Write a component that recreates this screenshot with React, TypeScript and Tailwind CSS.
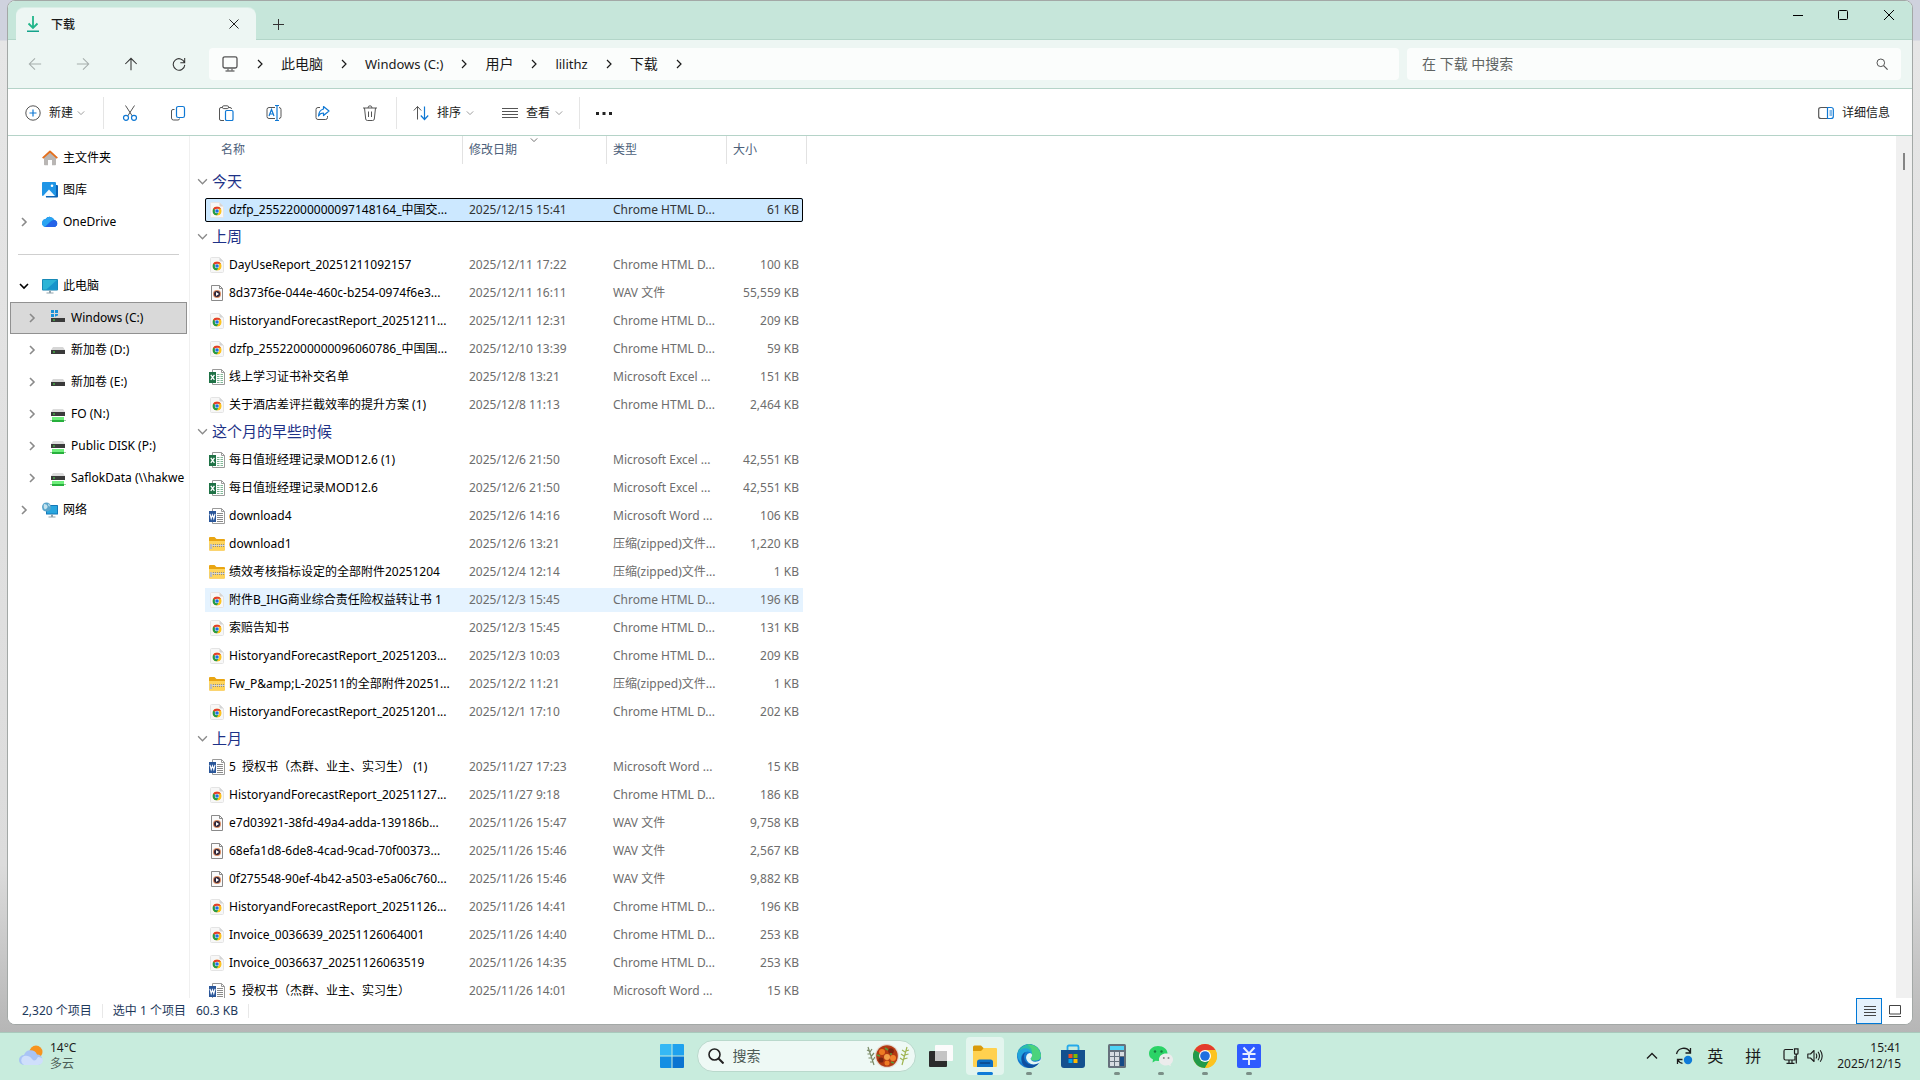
import React from "react";

type Kind = "chrome" | "wav" | "excel" | "word" | "zip";
type FileRow = { kind: Kind; name: string; date: string; type: string; size: string; state?: "selected" | "hover" };
type Group = { title: string; rows: FileRow[] };

const HTML = "Chrome HTML D...";
const XLS = "Microsoft Excel ...";
const DOC = "Microsoft Word ...";
const ZIP = "压缩(zipped)文件...";
const WAV = "WAV 文件";

const row = (kind: Kind, name: string, date: string, type: string, size: string, state?: FileRow["state"]): FileRow => ({
  kind,
  name,
  date,
  type,
  size,
  state,
});

const groups: Group[] = [
  {
    title: "今天",
    rows: [row("chrome", "dzfp_25522000000097148164_中国交...", "2025/12/15 15:41", HTML, "61 KB", "selected")],
  },
  {
    title: "上周",
    rows: [
      row("chrome", "DayUseReport_20251211092157", "2025/12/11 17:22", HTML, "100 KB"),
      row("wav", "8d373f6e-044e-460c-b254-0974f6e3...", "2025/12/11 16:11", WAV, "55,559 KB"),
      row("chrome", "HistoryandForecastReport_20251211...", "2025/12/11 12:31", HTML, "209 KB"),
      row("chrome", "dzfp_25522000000096060786_中国国...", "2025/12/10 13:39", HTML, "59 KB"),
      row("excel", "线上学习证书补交名单", "2025/12/8 13:21", XLS, "151 KB"),
      row("chrome", "关于酒店差评拦截效率的提升方案 (1)", "2025/12/8 11:13", HTML, "2,464 KB"),
    ],
  },
  {
    title: "这个月的早些时候",
    rows: [
      row("excel", "每日值班经理记录MOD12.6 (1)", "2025/12/6 21:50", XLS, "42,551 KB"),
      row("excel", "每日值班经理记录MOD12.6", "2025/12/6 21:50", XLS, "42,551 KB"),
      row("word", "download4", "2025/12/6 14:16", DOC, "106 KB"),
      row("zip", "download1", "2025/12/6 13:21", ZIP, "1,220 KB"),
      row("zip", "绩效考核指标设定的全部附件20251204", "2025/12/4 12:14", ZIP, "1 KB"),
      row("chrome", "附件B_IHG商业综合责任险权益转让书 1", "2025/12/3 15:45", HTML, "196 KB", "hover"),
      row("chrome", "索赔告知书", "2025/12/3 15:45", HTML, "131 KB"),
      row("chrome", "HistoryandForecastReport_20251203...", "2025/12/3 10:03", HTML, "209 KB"),
      row("zip", "Fw_P&amp;L-202511的全部附件20251...", "2025/12/2 11:21", ZIP, "1 KB"),
      row("chrome", "HistoryandForecastReport_20251201...", "2025/12/1 17:10", HTML, "202 KB"),
    ],
  },
  {
    title: "上月",
    rows: [
      row("word", "5\u00a0 授权书（杰群、业主、实习生） (1)", "2025/11/27 17:23", DOC, "15 KB"),
      row("chrome", "HistoryandForecastReport_20251127...", "2025/11/27 9:18", HTML, "186 KB"),
      row("wav", "e7d03921-38fd-49a4-adda-139186b...", "2025/11/26 15:47", WAV, "9,758 KB"),
      row("wav", "68efa1d8-6de8-4cad-9cad-70f00373...", "2025/11/26 15:46", WAV, "2,567 KB"),
      row("wav", "0f275548-90ef-4b42-a503-e5a06c760...", "2025/11/26 15:46", WAV, "9,882 KB"),
      row("chrome", "HistoryandForecastReport_20251126...", "2025/11/26 14:41", HTML, "196 KB"),
      row("chrome", "Invoice_0036639_20251126064001", "2025/11/26 14:40", HTML, "253 KB"),
      row("chrome", "Invoice_0036637_20251126063519", "2025/11/26 14:35", HTML, "253 KB"),
      row("word", "5\u00a0 授权书（杰群、业主、实习生）", "2025/11/26 14:01", DOC, "15 KB"),
    ],
  },
];

function Svg({ children, className = "size-4", box = "0 0 16 16" }: { children: React.ReactNode; className?: string; box?: string }) {
  return (
    <svg viewBox={box} fill="none" className={`shrink-0 ${className}`} aria-hidden="true">
      {children}
    </svg>
  );
}

const Chevron = ({ dir, className, weight = 1.2 }: { dir: "right" | "down"; className: string; weight?: number }) => (
  <Svg box="0 0 10 10" className={className}>
    <path d={dir === "right" ? "M3 1l4 4-4 4" : "M1 3l4 4 4-4"} stroke="currentColor" strokeWidth={weight} />
  </Svg>
);

function ChromeLogo() {
  return (
    <>
      <circle cx="12" cy="12" r="12" fill="#fbc116" />
      <path d="M12 12L1.6 6A12 12 0 0 1 22.4 6Z" fill="#e33b2e" />
      <path d="M12 12L1.6 6A12 12 0 0 0 12 24L17.2 15Z" fill="#229a49" />
      <path d="M12 6h10.4A12 12 0 0 1 12 24l5.2-9z" fill="#fcc31e" />
      <circle cx="12" cy="12" r="6" fill="#fff" />
      <circle cx="12" cy="12" r="4.8" fill="#1d6fe0" />
    </>
  );
}

function FileIcon({ kind }: { kind: Kind }) {
  if (kind === "chrome")
    return (
      <Svg>
        <path d="M1.5 1.5q0-1 1-1h8l4 4v10q0 1-1 1h-11q-1 0-1-1z" fill="#f7f7f7" stroke="#e4e4e4" />
        <path d="M10.5.5v3q0 1 1 1h3z" fill="#d4d4d4" />
        <svg x="3.500" y="4.500" width="9" height="9" viewBox="0 0 24 24">
          <ChromeLogo />
        </svg>
      </Svg>
    );
  if (kind === "wav")
    return (
      <Svg>
        <path d="M2.5.5h8l3 3v12h-11z" fill="#fafafa" stroke="#8a8a8a" />
        <path d="M10.5.5v3h3" stroke="#8a8a8a" />
        <circle cx="8" cy="9" r="4" fill="#d98b62" />
        <circle cx="8" cy="9" r="3" fill="#2b2338" />
        <path d="M7 7l3 2-3 2z" fill="#fff" />
      </Svg>
    );
  if (kind === "zip")
    return (
      <Svg>
        <path d="M0 2q0-1 1-1h4.5l2 2H15q1 0 1 1v9.500q0 1-1 1H1q-1 0-1-1z" fill="#e9a512" />
        <path d="M0 5h16v8.500q0 1-1 1H1q-1 0-1-1z" fill="#ffd55c" />
        <path d="M2 8.500h14M2 10.500h14" stroke="#8c8c8c" strokeDasharray="1 1" />
        <path d="M2 9.500h14" stroke="#d8d8d8" />
        <path d="M.8 8h2.400v5H.8z" fill="#b9bdc4" />
      </Svg>
    );
  const excel = kind === "excel";
  const tone = excel ? "#1f7246" : "#2a5699";
  return (
    <Svg>
      <path d="M3.500.5h9l3 3v12h-12z" fill="#fff" stroke="#9a9a9a" />
      <path d="M12.500.5v3h3" stroke="#9a9a9a" />
      {excel ? (
        <path d="M8 5.500h6M8 7.500h6M8 9.500h6M8 11.500h6M8 13.500h6" stroke="#7fb796" strokeDasharray="2.500 1" />
      ) : (
        <path d="M8 5.500h6M8 7.500h6M8 9.500h6M8 11.500h6M8 13.500h6" stroke="#8a8a8a" />
      )}
      <path d="M0 3h7v11H0z" fill={tone} />
      {excel ? (
        <path d="M1.800 5.800l3.600 5M5.400 5.800l-3.600 5" stroke="#fff" strokeWidth="1.300" />
      ) : (
        <path d="M1 5.800l1.200 4.700 1.300-3.700 1.300 3.700L6 5.800" stroke="#fff" strokeWidth="1.100" />
      )}
    </Svg>
  );
}

/* ---------- sidebar ---------- */

const HomeIcon = () => (
  <Svg>
    <path d="M2 7.500L8 2l6 5.500V14.500q0 .8-.8.8H10V10H6v5.300H2.800q-.8 0-.8-.8z" fill="#b9b6b4" />
    <path d="M.7 8.200L8 1.500l7.300 6.700" stroke="#e46f1d" strokeWidth="1.800" strokeLinejoin="round" />
  </Svg>
);
const GalleryIcon = () => (
  <Svg>
    <path d="M3 3h12q1 0 1 1v10.500q0 1-1 1H4z" fill="#0b62b4" />
    <rect width="14" height="14" rx="1" fill="#1f95e6" />
    <path d="M1 14l6-6.500 6 6.500z" fill="#f3faff" />
    <circle cx="10" cy="3.800" r="1.300" fill="#fff" />
  </Svg>
);
const CloudIcon = () => (
  <Svg>
    <path d="M4 13a4 4 0 0 1-.4-7.900A5 5 0 0 1 12.400 6 3.600 3.600 0 0 1 12.500 13z" fill="#1378dc" />
    <path d="M3.600 5.100A5 5 0 0 1 12.400 6Q9 6 7 9L3 13a4 4 0 0 1 .6-7.900z" fill="#2aa4f2" />
    <path d="M3 13l5-4.500q2-2.500 4.400-2.500a3.600 3.600 0 0 1 .1 7z" fill="#2563e8" />
  </Svg>
);
const PcIcon = () => (
  <Svg>
    <rect x="0" y="1" width="16" height="11.500" rx="1" fill="#137fae" />
    <rect x=".8" y="1.800" width="14.400" height="9.900" fill="#2cb4d6" />
    <path d="M15.200 1.800v9.900H4z" fill="#1794cb" />
    <path d="M7 12.500h2v2H7zM4.500 14.500h7v1h-7z" fill="#8fa3ad" />
  </Svg>
);
const Drive = ({ net = false, win = false }: { net?: boolean; win?: boolean }) => (
  <Svg>
    {win && <path d="M1 0h3v3H1zM5 0h3v3H5zM1 4h3v3H1zM5 4h3v3H5z" fill="#1991d8" />}
    {net ? (
      <>
        <path d="M3 3h10l2 3H1z" fill="#dcdcdc" />
        <rect x="1" y="6" width="14" height="4" fill="#3a3a3a" />
        <path d="M3 8h2" stroke="#4be04b" />
        <path d="M0 14.500h16" stroke="#9fc9a5" />
        <rect x="2" y="11" width="12" height="3" fill="#6fee7c" />
        <rect x="2" y="14" width="12" height="2" fill="#27b03c" />
      </>
    ) : (
      <>
        <path d={win ? "M9 5h4l2 3H2z" : "M3 5h10l2 3H1z"} fill="#d6d6d6" />
        <rect x="1" y="8" width="14" height="4" fill="#3a3a3a" />
        <path d="M3 10h2" stroke="#4be04b" />
      </>
    )}
  </Svg>
);
const NetworkIcon = () => (
  <Svg>
    <rect x="4" y="3" width="12" height="9.500" rx=".5" fill="#1478b8" />
    <rect x="5" y="4" width="10" height="7.500" fill="#29a6de" />
    <path d="M9 12.500h2v2H9zM6.500 14.500h7v1h-7z" fill="#8fa3ad" />
    <circle cx="4.500" cy="5" r="4.500" fill="#5aa5cb" />
    <path d="M2 2q3 0 3.500 2T3 7.500Q1 6 2 2zM6 1.500q2 1 2 3L6.500 4z" fill="#c5e3ee" />
  </Svg>
);

type NavNode = { label: string; icon: React.ReactNode; arrow?: "right" | "down"; child?: boolean; active?: boolean };
const quick: NavNode[] = [
  { label: "主文件夹", icon: <HomeIcon /> },
  { label: "图库", icon: <GalleryIcon /> },
  { label: "OneDrive", icon: <CloudIcon />, arrow: "right" },
];
const tree: NavNode[] = [
  { label: "此电脑", icon: <PcIcon />, arrow: "down" },
  { label: "Windows (C:)", icon: <Drive win />, arrow: "right", child: true, active: true },
  { label: "新加卷 (D:)", icon: <Drive />, arrow: "right", child: true },
  { label: "新加卷 (E:)", icon: <Drive />, arrow: "right", child: true },
  { label: "FO (N:)", icon: <Drive net />, arrow: "right", child: true },
  { label: "Public DISK (P:)", icon: <Drive net />, arrow: "right", child: true },
  { label: "SaflokData (\\\\hakwe", icon: <Drive net />, arrow: "right", child: true },
  { label: "网络", icon: <NetworkIcon />, arrow: "right" },
];

function NavItem({ node }: { node: NavNode }) {
  return (
    <li>
      <a
        href="#"
        className={`flex h-8 items-center overflow-hidden whitespace-nowrap border ${node.child ? "pl-4" : "pl-2"} ${
          node.active ? "border-[#919191] bg-[#d9d9d9]" : "border-transparent"
        }`}
      >
        <span className="flex w-[23px] shrink-0">
          {node.arrow && (
            <Chevron
              dir={node.arrow}
              weight={1.6}
              className={`size-[10px] ${node.arrow === "down" ? "text-black" : "text-[#8a8a8a]"}`}
            />
          )}
        </span>
        {node.icon}
        <span className="ml-[5px]">{node.label}</span>
      </a>
    </li>
  );
}

function Sidebar() {
  return (
    <nav aria-label="导航窗格" className="w-[182px] shrink-0 border-r border-[#f0f0f0] px-[2px] pt-[6px]">
      <ul>
        {quick.map((n) => (
          <NavItem key={n.label} node={n} />
        ))}
      </ul>
      <div className="flex h-8 items-center px-2">
        <hr className="w-full border-[#cfcfcf]" />
      </div>
      <ul>
        {tree.map((n) => (
          <NavItem key={n.label} node={n} />
        ))}
      </ul>
    </nav>
  );
}

/* ---------- file list ---------- */

const rowTone = {
  selected: "bg-[#cce8ff] text-[#333] outline outline-1 -outline-offset-1 outline-black rounded-[2px]",
  hover: "bg-[#e5f3ff] text-[#6d6d6d]",
  plain: "text-[#6d6d6d]",
};

function FileList() {
  return (
    <main className="min-w-0 flex-1 overflow-hidden pl-[15px]">
      <table className="-mt-1 w-[598px] table-fixed border-separate border-spacing-x-0 border-spacing-y-[4px] whitespace-nowrap">
        <colgroup>
          <col className="w-[258px]" />
          <col className="w-[144px]" />
          <col className="w-[120px]" />
          <col className="w-[76px]" />
        </colgroup>
        <thead>
          <tr className="h-[31px] text-left align-top text-[#4c607a]">
            <th className="p-0 font-normal">
              <div className="flex h-7 items-center border-r border-[#e2e2e2] pl-4">名称</div>
            </th>
            <th className="p-0 font-normal">
              <div className="relative flex h-7 items-center border-r border-[#e2e2e2] pl-1.5">
                修改日期
                <Chevron dir="down" className="absolute top-0 left-[67px] size-2 text-[#6d6d6d]" />
              </div>
            </th>
            <th className="p-0 font-normal">
              <div className="flex h-7 items-center border-r border-[#e2e2e2] pl-1.5">类型</div>
            </th>
            <th className="p-0 font-normal">
              <div className="-mr-1 flex h-7 items-center border-r border-[#e2e2e2] pl-1.5">大小</div>
            </th>
          </tr>
        </thead>
        {groups.map((g) => (
          <tbody key={g.title}>
            <tr className="h-[23px]">
              <th colSpan={4} className="text-left align-top text-[15px] leading-[21px] font-normal text-[#1e3287]">
                <button type="button" className="-ml-2 flex h-[21px] items-center gap-1">
                  <Chevron dir="down" className="size-[11px] text-[#8a8a8a]" />
                  {g.title}
                </button>
              </th>
            </tr>
            {g.rows.map((r) => (
              <tr key={r.name} className={`h-6 ${rowTone[r.state ?? "plain"]}`}>
                <td className="pl-1 text-black">
                  <span className="flex items-center gap-1">
                    <FileIcon kind={r.kind} />
                    <span>{r.name}</span>
                  </span>
                </td>
                <td className="pl-1.5">{r.date}</td>
                <td className="pl-1.5">{r.type}</td>
                <td className="pr-1 text-right">{r.size}</td>
              </tr>
            ))}
          </tbody>
        ))}
      </table>
    </main>
  );
}

/* ---------- window chrome ---------- */

function TitleBar() {
  return (
    <header className="flex h-[39px] items-start bg-[#c6e6da] pl-2 shadow-[inset_0_-1px_0_#b3d6c9]">
      <div className="mt-[7px] flex h-8 w-60 items-center rounded-t-lg bg-[#edf6f3] pr-3 pl-[11px] shadow-[0_-1px_0_#d9eee6]">
        <Svg className="h-4 w-3" box="0 0 12 16">
          <path d="M6 0v12M1.500 7.500L6 12 10.500 7.500" stroke="#21b58a" strokeWidth="1.800" />
          <path d="M0 15.200h12" stroke="#14a38b" strokeWidth="1.600" />
        </Svg>
        <span className="mt-[2px] ml-3 flex-1 font-medium text-[#1a1a1a]">下载</span>
        <button type="button" aria-label="关闭标签页" className="flex size-5 items-center justify-center">
          <Svg box="0 0 10 10" className="size-[10px]">
            <path d="M.5.5l9 9M9.500.5l-9 9" stroke="#222" />
          </Svg>
        </button>
      </div>
      <button type="button" aria-label="新建标签页" className="mt-[7px] ml-3 flex h-8 w-5 items-center justify-center">
        <Svg box="0 0 11 11" className="size-[11px]">
          <path d="M5.500 0v11M0 5.500h11" stroke="#333" />
        </Svg>
      </button>
      <div className="ml-auto flex h-7 items-center">
        <button type="button" aria-label="最小化" className="flex h-7 w-11 items-center justify-center">
          <Svg box="0 0 10 10" className="size-[10px]">
            <path d="M0 5.500h10" stroke="#000" />
          </Svg>
        </button>
        <button type="button" aria-label="最大化" className="flex h-7 w-[46px] items-center justify-center">
          <Svg box="0 0 10 10" className="size-[10px]">
            <rect x=".5" y=".5" width="9" height="9" rx="1" stroke="#000" />
          </Svg>
        </button>
        <button type="button" aria-label="关闭" className="flex h-7 w-[46px] items-center justify-center">
          <Svg box="0 0 10 10" className="size-[10px]">
            <path d="M0 0l10 10M10 0L0 10" stroke="#000" />
          </Svg>
        </button>
      </div>
    </header>
  );
}

function NavButton({ label, d, muted = false }: { label: string; d: string; muted?: boolean }) {
  return (
    <button type="button" aria-label={label} className={`flex w-12 items-center justify-center ${muted ? "text-[#a5adab]" : "text-[#333]"}`}>
      <Svg className="size-[14px]">
        <path d={d} stroke="currentColor" strokeWidth="1.200" />
      </Svg>
    </button>
  );
}

const crumbs = [
  { label: "此电脑", size: "text-[14px]" },
  { label: "Windows (C:)", size: "text-[13px]" },
  { label: "用户", size: "text-[14px]" },
  { label: "lilithz", size: "text-[13px]" },
  { label: "下载", size: "text-[14px]" },
];

function AddressRow() {
  return (
    <div className="flex h-[49px] items-center border-b border-[#b5d3c8] bg-[#edf6f3] pr-[11px] pl-[3px] text-sm text-[#1a1a1a]">
      <NavButton label="后退" muted d="M15 8H1.500M8 1.500L1.500 8 8 14.500" />
      <NavButton label="前进" muted d="M1 8h13.500M8 1.500L14.500 8 8 14.500" />
      <NavButton label="上移" d="M8 15V1.500M1.500 8L8 1.500 14.500 8" />
      <NavButton label="刷新" d="M14.300 6.500A6.600 6.600 0 1 0 14.600 9M14.500 1v5.500H9.500" />
      <div className="ml-[6px] flex h-8 min-w-0 flex-1 items-center rounded bg-[#fbfdfc] pl-[13px]">
        <Svg className="size-4">
          <rect x="1" y=".8" width="14" height="11.200" rx="1.800" stroke="#555" strokeWidth="1.300" />
          <path d="M6 12v2.500M10 12v2.500M3.500 15h9" stroke="#777" strokeWidth="1.400" />
        </Svg>
        <Chevron dir="right" className="ml-[17px] size-[10px]" />
        {crumbs.map((c) => (
          <span key={c.label} className="ml-4 flex items-center gap-4 whitespace-nowrap">
            <a href="#" className={c.size}>
              {c.label}
            </a>
            <Chevron dir="right" className="size-[10px]" />
          </span>
        ))}
      </div>
      <label className="ml-2 flex h-8 w-[494px] items-center rounded bg-[#fbfdfc] pr-[13px] pl-[15px]">
        <input
          aria-label="搜索"
          placeholder="在 下载 中搜索"
          className="min-w-0 flex-1 bg-transparent outline-none placeholder:text-[#5f6463]"
        />
        <Svg box="0 0 12 12" className="size-3">
          <circle cx="4.800" cy="4.800" r="3.800" stroke="#555" />
          <path d="M7.600 7.600l4 4" stroke="#555" strokeWidth="1.200" />
        </Svg>
      </label>
    </div>
  );
}

const B = "#0f78d4";
const G = "#555";

const iconButtons: { label: string; icon: React.ReactNode }[] = [
  {
    label: "剪切",
    icon: (
      <>
        <path d="M3.500.5l6.800 10.500M12.500.5L5.700 11" stroke={G} />
        <circle cx="4" cy="12.800" r="2.500" stroke={B} strokeWidth="1.200" />
        <circle cx="12" cy="12.800" r="2.500" stroke={B} strokeWidth="1.200" />
      </>
    ),
  },
  {
    label: "复制",
    icon: (
      <>
        <path d="M4.500 4.500H3q-1.500 0-1.500 1.500v7q0 2 2 2H8q1.500 0 1.500-1.500" stroke={G} />
        <rect x="6.500" y="1.500" width="8" height="11" rx="1.800" stroke={B} strokeWidth="1.200" />
      </>
    ),
  },
  {
    label: "粘贴",
    icon: (
      <>
        <path d="M4.500 2.500H3Q1.500 2.500 1.500 4v10q0 1.500 1.500 1.500h3M10.500 2.500H12q1.500 0 1.500 1.500" stroke={G} />
        <rect x="4.500" y=".8" width="6" height="2.800" rx="1.200" stroke={G} />
        <rect x="7.500" y="5.500" width="7.500" height="10" rx="1.300" stroke={B} strokeWidth="1.200" />
      </>
    ),
  },
  {
    label: "重命名",
    icon: (
      <>
        <path d="M9 2.500H3Q1 2.500 1 4.500v7q0 2 2 2h6M13 2.500q2 0 2 2v7q0 2-2 2" stroke={G} />
        <path d="M9 .5h4M9 15.500h4M11 .5v15" stroke={B} strokeWidth="1.200" />
        <path d="M3 11l2.500-6.500L8 11M3.800 9h3.400" stroke={B} strokeWidth="1.200" />
      </>
    ),
  },
  {
    label: "共享",
    icon: (
      <>
        <path d="M6 2.500H4Q2 2.500 2 4.500v8q0 2 2 2h7.500q2 0 2-2V11" stroke={G} />
        <path d="M9.500 1.500l5.500 4.500-5.500 4.500V8Q6 8 4.500 11 5 5 9.500 4z" stroke={B} strokeWidth="1.200" strokeLinejoin="round" />
      </>
    ),
  },
  {
    label: "删除",
    icon: (
      <path d="M1 3h14M2.500 3l1.200 11q.2 1.500 1.700 1.500h5.200q1.500 0 1.700-1.500L13.500 3M6 3q0-2.200 2-2.200T10 3M6.500 6.500v5.500M9.500 6.500v5.500" stroke={G} />
    ),
  },
];

const Sep = ({ className }: { className: string }) => <span className={`h-8 w-px bg-[#e5e5e5] ${className}`} />;
const SmallDown = () => <Chevron dir="down" className="size-2 text-[#999]" />;

function Toolbar() {
  return (
    <div role="toolbar" className="flex h-[47px] items-center border-b border-[#b5d3c8] bg-white pt-[2px] pr-[22px] pl-[17px] text-[#1a1a1a]">
      <button type="button" className="flex items-center gap-2">
        <Svg>
          <circle cx="8" cy="8" r="7.200" stroke={G} />
          <path d="M8 4.500v7M4.500 8h7" stroke={B} strokeWidth="1.200" />
        </Svg>
        新建
        <span className="-ml-1">
          <SmallDown />
        </span>
      </button>
      <Sep className="mx-[18px]" />
      <div className="flex gap-8">
        {iconButtons.map((b) => (
          <button key={b.label} type="button" aria-label={b.label}>
            <Svg>{b.icon}</Svg>
          </button>
        ))}
      </div>
      <Sep className="mr-4 ml-[18px]" />
      <button type="button" className="flex items-center gap-2">
        <Svg>
          <path d="M4.500 14.500v-13M.8 5.500l3.700-4 3.700 4" stroke={G} />
          <path d="M11.500 1.500v13M7.800 10.500l3.700 4 3.700-4" stroke={B} strokeWidth="1.200" />
        </Svg>
        排序
        <span className="-ml-[3px]">
          <SmallDown />
        </span>
      </button>
      <button type="button" className="ml-7 flex items-center gap-2">
        <Svg>
          <path d="M0 3.500h16M0 6.500h16M0 9.500h16M0 12.500h16" stroke={G} />
        </Svg>
        查看
        <span className="-ml-[3px]">
          <SmallDown />
        </span>
      </button>
      <Sep className="mx-4" />
      <button type="button" aria-label="更多">
        <Svg>
          <path d="M0 7h3v3H0zM6.500 7h3v3h-3zM13 7h3v3h-3z" fill="#222" />
        </Svg>
      </button>
      <button type="button" className="ml-auto flex items-center gap-2">
        <Svg>
          <path d="M9 2.500H3q-2.300 0-2.300 2v7q0 2 2.300 2h6" stroke={G} strokeWidth="1.200" />
          <path d="M9.500 2.500h3.500q2.300 0 2.300 2v7q0 2-2.300 2H9.500zM11.500 6h2.500M11.500 8h2.500M11.500 10h2.500" stroke={B} strokeWidth="1.200" />
        </Svg>
        详细信息
      </button>
    </div>
  );
}

function StatusBar() {
  return (
    <footer className="flex h-[26px] items-center bg-white pl-[14px] text-[#1e395b]">
      <span>2,320 个项目</span>
      <span className="mx-[10px] h-[14px] w-px bg-[#e8e8e8]" />
      <span>选中 1 个项目</span>
      <span className="ml-[10px]">60.3 KB</span>
      <span className="mx-[10px] h-[14px] w-px bg-[#e8e8e8]" />
      <button
        type="button"
        aria-label="详细信息视图"
        className="ml-auto flex h-full w-[26px] items-center justify-center border border-[#0078d7] bg-[#e5f1fb]"
      >
        <Svg box="0 0 12 12" className="ml-[2px] size-3">
          <path d="M0 1.500h12M0 4.500h12M0 7.500h12M0 10.500h12" stroke="#444" />
        </Svg>
      </button>
      <button type="button" aria-label="大图标视图" className="mr-[11px] ml-[7px]">
        <Svg box="0 0 12 12" className="size-3">
          <path d="M.5.500h11v8.500H.5zM0 11.500h12" stroke="#444" />
        </Svg>
      </button>
    </footer>
  );
}

/* ---------- taskbar ---------- */

const apps: { label: string; icon: React.ReactNode; state?: "active" | "running" }[] = [
  {
    label: "任务视图",
    icon: (
      <>
        <rect x="0" y="7" width="18" height="16" rx="1" fill="#2b2b2b" />
        <rect x="6" y="1" width="18" height="16" rx="1" fill="#fbfbfb" />
        <path d="M6 7h12v10H6z" fill="#c4c4c4" />
      </>
    ),
  },
  {
    label: "文件资源管理器",
    state: "active",
    icon: (
      <>
        <path d="M0 3q0-1.500 1.500-1.500H8l3 3V9H0z" fill="#d99a0b" />
        <path d="M0 7h8l3-3h12q1 0 1 1v17q0 1-1 1H1q-1 0-1-1z" fill="#ffd14f" />
        <path d="M4 23v-5q0-2.500 2.500-2.500h11Q20 15.500 20 18v5z" fill="#0c6fc4" />
        <path d="M7.500 18h9q.8 0 .8 1t-.8 1h-9q-.8 0-.8-1t.8-1z" fill="#0a4f95" />
      </>
    ),
  },
  {
    label: "Edge",
    state: "running",
    icon: (
      <>
        <circle cx="12" cy="12" r="12" fill="#1479d0" />
        <path d="M.3 10A12 12 0 0 1 24 11q0 5.500-6 5.500-4.500 0-4.500-2 2-1 1.500-4Q13 6 8 6.500 3 7 .3 10z" fill="#2dc0a6" />
        <path d="M10 .200Q22 0 24 11q0 5.500-6 5.500-4.500 0-4.500-2 2-1 1.500-4Q16 4 10 .2z" fill="#4bd37c" />
        <path d="M.3 10Q3 4 9 4.200q5 .3 6 6.300Q13 6.500 8.500 8 2 10.500 5 19 0 15 .3 10z" fill="#22a4dc" />
        <path d="M8.500 8Q5 13 9 18t13 1q-3.500 5-10 5-8-2-7.500-9Q5 9.500 8.500 8z" fill="#0f4f9f" />
        <path d="M13.500 14.500q.5 3 4.500 3.200 3 .2 6-2-1 2.600-2 3.300-6 3-10.500-.5-3.500-3.500-2-7 .8-2.500 3.500-2.500 2.500.5 2 3-.6 1.500-1.500 2.500z" fill="#e5f5f5" />
      </>
    ),
  },
  {
    label: "Microsoft Store",
    icon: (
      <>
        <path d="M6.500 7V3q0-1.500 1.500-1.500h8q1.500 0 1.500 1.500v4" stroke="#25a9ea" strokeWidth="1.800" />
        <path d="M0 6h24v15q0 3-3 3H3q-3 0-3-3z" fill="#14508e" />
        <path d="M7.500 10h4v4h-4z" fill="#f25022" />
        <path d="M12.500 10h4v4h-4z" fill="#7fba00" />
        <path d="M7.500 15h4v4h-4z" fill="#00a4ef" />
        <path d="M12.500 15h4v4h-4z" fill="#ffb900" />
      </>
    ),
  },
  {
    label: "计算器",
    state: "running",
    icon: (
      <>
        <rect x="3" y="0" width="18" height="24" rx="1.500" fill="#66717c" />
        <rect x="5" y="2" width="14" height="4" fill="#4fd3f5" />
        <path d="M5 8h4v4H5zM10 8h4v4h-4zM15 8h4v4h-4zM5 13h4v4H5zM10 13h4v4h-4zM5 18h4v4H5zM10 18h4v4h-4z" fill="#d7dce1" />
        <path d="M15 13h4v9h-4z" fill="#164a86" />
      </>
    ),
  },
  {
    label: "微信",
    state: "running",
    icon: (
      <>
        <path d="M9 2c5.500 0 9.500 3.200 9.500 7.500S14.500 17 9 17l-2.500-.3L3.500 18.500l.5-3C1 14 0 12 0 9.500 0 5.200 4 2 9 2z" fill="#2bd366" />
        <circle cx="6" cy="7.500" r="1.200" fill="#167a3c" />
        <circle cx="12.500" cy="7.500" r="1.200" fill="#167a3c" />
        <path d="M17 9.500c4 0 7 2.600 7 6 0 2-1 3.600-2.500 4.700l.3 2-2.200-1.100q-1.200.4-2.600.4c-4 0-7-2.600-7-6s3-6 7-6z" fill="#ececec" />
        <circle cx="14.800" cy="14" r="1" fill="#8a8a8a" />
        <circle cx="19.500" cy="14" r="1" fill="#8a8a8a" />
      </>
    ),
  },
  { label: "Chrome", state: "running", icon: <ChromeLogo /> },
  {
    label: "收银",
    state: "running",
    icon: (
      <>
        <rect width="24" height="24" rx="2" fill="#2f5bff" />
        <path d="M6.500 3.500l5.500 6 5.500-6M5.500 10h13M5.500 15h13M12 9.500V21" stroke="#e8eeff" strokeWidth="1.900" />
      </>
    ),
  },
];

const Food = () => (
  <Svg box="0 0 44 24" className="h-6 w-11">
    <path d="M2 3l6 18M3 7L1 6M4.500 10l-3 0M6 14l-3.500 0M7 18l-3 0M4 8l2-3M5.500 12l2.500-3M7 16l2-3" stroke="#7b8b66" strokeWidth="1.200" />
    <path d="M41 3l-5 18M40 7l3-1M39 11l3.500-1M38 15l3.500-1M39 8l-3-2M38 12l-3-2M37 16l-3-2" stroke="#a0b552" strokeWidth="1.200" />
    <circle cx="21" cy="12" r="12" fill="#e3dbd2" />
    <circle cx="21" cy="12" r="10.800" fill="#b33a12" />
    <circle cx="16" cy="8" r="3" fill="#ee7a22" />
    <circle cx="25" cy="7" r="2.800" fill="#7a2310" />
    <circle cx="21" cy="13" r="3" fill="#f3a04a" />
    <circle cx="15" cy="16" r="2.600" fill="#7a2310" />
    <circle cx="27" cy="14" r="3" fill="#f0832c" />
    <circle cx="21" cy="19" r="2.500" fill="#ee7a22" />
    <path d="M19 4l3 2M11 11l3 1M25 18l3 1M24 10l2 0" stroke="#5c9a3a" strokeWidth="1.600" />
  </Svg>
);

function Taskbar() {
  return (
    <footer className="grid h-12 grid-cols-[1fr_auto_1fr] items-center border-t border-[#a9c9bc] bg-[#c8ecdd] pb-[2px] text-[#1c1c1c]">
      <button type="button" className="flex items-center gap-[7px] justify-self-start pl-[19px] text-left leading-4">
        <Svg box="0 0 24 24" className="size-6">
          <circle cx="17" cy="8" r="6.500" fill="#f7941e" />
          <path d="M5 21a5 5 0 0 1 0-10 7 7 0 0 1 13-.5A5.300 5.300 0 0 1 19 21z" fill="#a9c4f5" />
          <path d="M5 21a5 5 0 0 1 0-9q5-1 8 3t6-2q4 0 5 3a5 5 0 0 1-5 5z" fill="#cfdffb" />
        </Svg>
        <span>
          <span className="block">14°C</span>
          <span className="block text-[#4f5f58]">多云</span>
        </span>
      </button>
      <div className="flex items-center pl-[10px]">
        <button type="button" aria-label="开始" className="mr-[13px]">
          <Svg box="0 0 24 24" className="size-6">
            <path d="M0 1q0-1 1-1h10.500v11.500H0z" fill="#35b8f5" />
            <path d="M12.500 0H23q1 0 1 1v10.500H12.500z" fill="#1fa2ee" />
            <path d="M0 12.500h11.500V24H1q-1 0-1-1z" fill="#148fe3" />
            <path d="M12.500 12.500H24V23q0 1-1 1H12.500z" fill="#0a74d1" />
          </Svg>
        </button>
        <label className="mr-[3px] flex h-8 w-[219px] items-center rounded-full border border-[#b9d9cc] bg-[#eef9f5] pr-[5px] pl-[10px] text-sm">
          <Svg>
            <circle cx="6.500" cy="6.500" r="5.500" stroke="#222" strokeWidth="1.600" />
            <path d="M10.500 10.500l5 5" stroke="#222" strokeWidth="2" />
          </Svg>
          <input
            aria-label="搜索应用"
            placeholder="搜索"
            className="ml-[9px] w-0 min-w-0 flex-1 bg-transparent outline-none placeholder:text-[#4d5a55]"
          />
          <Food />
        </label>
        {apps.map((a) => (
          <button
            key={a.label}
            type="button"
            aria-label={a.label}
            className={`relative mx-[3px] flex h-[38px] w-[38px] items-center justify-center rounded ${a.state === "active" ? "bg-[#e3f5ee]" : ""}`}
          >
            <Svg box="0 0 24 24" className="size-6">
              {a.icon}
            </Svg>
            {a.state && (
              <span
                className={`absolute bottom-0 h-[3px] rounded-full ${a.state === "active" ? "w-4 bg-[#0f7bd8]" : "w-[6px] bg-[#7b8f87]"}`}
              />
            )}
          </button>
        ))}
      </div>
      <div className="flex items-center justify-self-end pr-[19px]">
        <button type="button" aria-label="显示隐藏的图标">
          <Svg box="0 0 12 12" className="size-3">
            <path d="M1 8.500l5-5 5 5" stroke="#1c1c1c" strokeWidth="1.400" />
          </Svg>
        </button>
        <button type="button" aria-label="更新" className="ml-[17px]">
          <Svg box="0 0 18 18" className="size-[18px]">
            <path d="M1.500 7A7.300 7.300 0 0 1 15 5M15.500 1v5h-5M2.500 17v-4.500h5M2.500 12.500q2 3.500 5 3.800" stroke="#1c1c1c" strokeWidth="1.300" />
            <circle cx="13" cy="13" r="4.200" fill="#0f7bd8" />
          </Svg>
        </button>
        <button type="button" className="ml-[14px] text-base">英</button>
        <button type="button" className="ml-[22px] text-base">拼</button>
        <button type="button" aria-label="网络和音量" className="ml-[22px] flex gap-2">
          <Svg>
            <path d="M10 1.500H2.500q-1.500 0-1.500 1.500v7.500q0 1.500 1.500 1.500H12V8M6 12v3M9 12v3M3.500 15.300h8" stroke="#1c1c1c" strokeWidth="1.200" />
            <path d="M11.500.8h3.500v4.400q0 1-1 1h-1.500q-1 0-1-1zM13.300 6v9.500" stroke="#1c1c1c" strokeWidth="1.200" />
          </Svg>
          <Svg>
            <path d="M.8 6h2.700L7 2.500v11L3.500 10H.8z" stroke="#1c1c1c" strokeWidth="1.100" strokeLinejoin="round" />
            <path d="M9 5.500q1.500 2.500 0 5M11 3.800q3 4.200 0 8.400M13.200 2.200q4 5.800 0 11.600" stroke="#1c1c1c" strokeWidth="1.100" />
          </Svg>
        </button>
        <button type="button" className="ml-[14px] text-right leading-4">
          <span className="block">15:41</span>
          <span className="block">2025/12/15</span>
        </button>
      </div>
    </footer>
  );
}

export default function App() {
  return (
    <div className="flex h-screen flex-col overflow-hidden bg-[linear-gradient(#cfd2de_0,#cfd2de_40px,#e6e6e6_41px,#dcdcdc_80%,#b0b0b0_98%)] font-['Noto_Sans','Noto_Sans_CJK_SC',sans-serif] text-xs text-black">
      <section className="mx-[7px] mb-[7px] flex min-h-0 flex-1 flex-col overflow-hidden rounded-lg border border-[#a3a8a6] bg-white">
        <TitleBar />
        <AddressRow />
        <Toolbar />
        <div className="flex min-h-0 flex-1 bg-white">
          <Sidebar />
          <FileList />
          <div className="flex w-4 justify-center bg-[#f0f0f0] pt-[17px]">
            <span className="h-[17px] w-[2px] bg-[#858585]" />
          </div>
        </div>
        <StatusBar />
      </section>
      <Taskbar />
    </div>
  );
}
